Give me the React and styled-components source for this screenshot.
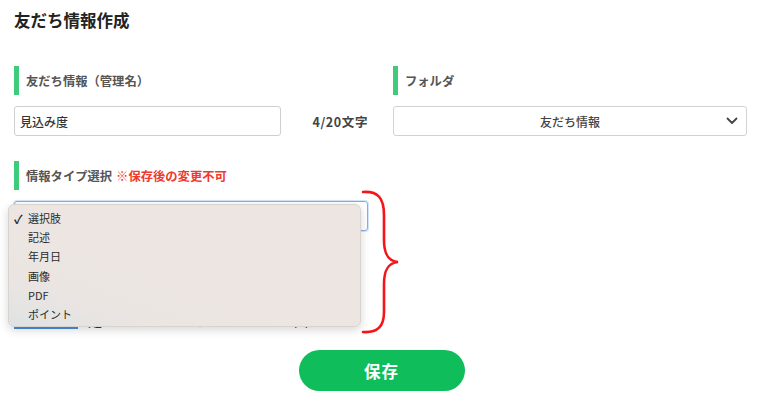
import React from "react";
import styled, { createGlobalStyle } from "styled-components";

const Global = createGlobalStyle`
  html, body { margin: 0; padding: 0; background: #fff; }
  body { font-family: "Noto Sans CJK JP", "Noto Sans", sans-serif; color: #333; }
  * { box-sizing: border-box; }
`;

const Page = styled.div`
  position: relative;
  width: 760px;
  height: 401px;
  overflow: hidden;
  padding: 0 13px 0 14px;
`;

const Title = styled.h1`
  margin: 0;
  padding-top: 10px;
  height: 30px;
  font-size: 16.5px;
  line-height: 20px;
  font-weight: 700;
  color: #222;
`;

const Grid = styled.div`
  display: grid;
  grid-template-columns: 354px 354px;
  column-gap: 25px;
  margin-top: ${(p) => p.$top}px;
`;

const Field = styled.div`
  display: flex;
  flex-direction: column;
  gap: 11px;
`;

const Label = styled.div`
  display: flex;
  align-items: center;
  gap: 7px;
  height: 29px;
  border-left: 5px solid #3ecc7c;
  padding-left: 7px;
  font-size: 12.3px;
  font-weight: 700;
  color: #555;
`;

const Note = styled.span`
  color: #f03a2c;
  margin-left: -3px;
`;

const InputRow = styled.div`
  display: flex;
  align-items: center;
  justify-content: space-between;
  height: 30px;
`;

const TextInput = styled.div`
  width: 267px;
  height: 30px;
  border: 1px solid #cfcfcf;
  border-radius: 3px;
  padding-left: 5px;
  display: flex;
  align-items: center;
  font-size: 12px;
  font-weight: 500;
  color: #333;
`;

const Counter = styled.span`
  font-size: 12.5px;
  font-weight: 700;
  color: #444;
  letter-spacing: 0.6px;
`;

const Select = styled.div`
  position: relative;
  height: 30px;
  border: 1px solid ${(p) => (p.$focused ? "#7eb1ea" : "#d2d2d2")};
  border-radius: 3px;
  display: flex;
  align-items: center;
  justify-content: center;
  font-size: 12px;
  font-weight: 500;
  color: #444;
  box-shadow: ${(p) => (p.$focused ? "0 0 0 1px rgba(126,177,234,0.35)" : "none")};
`;

const Chevron = styled.svg`
  position: absolute;
  right: 8px;
  top: 50%;
  transform: translateY(-50%);
`;

const HiddenRow = styled.div`
  display: flex;
  align-items: flex-start;
  height: 29px;
  margin-top: 74px;
  font-size: 14px;
  color: #333;
`;

const Tab = styled.div`
  width: 64px;
  height: 24px;
  border-bottom: 2px solid #4a8fdc;
  margin-right: 10px;
`;

const Peek = styled.span`
  display: inline-block;
  width: ${(p) => p.$w}px;
  line-height: 30px;
`;

const SaveWrap = styled.div`
  display: flex;
  justify-content: center;
  margin-top: 16px;
  padding-left: 2px;
`;

const SaveButton = styled.button`
  width: 166px;
  height: 41px;
  border: none;
  border-radius: 21px;
  background: #0fbd5b;
  color: #fff;
  font-family: inherit;
  font-size: 16.5px;
  font-weight: 700;
  letter-spacing: 1px;
`;

const Menu = styled.ul`
  position: absolute;
  left: 8px;
  top: 204px;
  width: 353px;
  height: 123px;
  margin: 0;
  padding: 4px 0 0 0;
  list-style: none;
  border-radius: 6px;
  background: linear-gradient(20deg, #dfe3e3 0%, #ebe5e2 22%, #ede5e2 60%, #ede5e2 100%);
  border: 1px solid #d9d3d0;
  box-shadow: 0 3px 10px rgba(0, 0, 0, 0.16);
`;

const MenuItem = styled.li`
  position: relative;
  height: 19.2px;
  line-height: 19.2px;
  padding-left: 19px;
  font-size: 11px;
  color: #2a2a2a;
`;

const Check = styled.span`
  position: absolute;
  left: 5px;
  top: 0;
  font-size: 12px;
  font-weight: 700;
`;

const Brace = styled.svg`
  position: absolute;
  left: 356px;
  top: 186px;
`;

const items = ["選択肢", "記述", "年月日", "画像", "PDF", "ポイント"];

export default function App() {
  return (
    <>
      <Global />
      <Page>
        <Title>友だち情報作成</Title>
        <Grid $top={36}>
          <Field>
            <Label>友だち情報（管理名）</Label>
            <InputRow>
              <TextInput>見込み度</TextInput>
              <Counter>4/20文字</Counter>
            </InputRow>
          </Field>
          <Field>
            <Label>フォルダ</Label>
            <Select>
              友だち情報
              <Chevron width="12" height="8" viewBox="0 0 12 8">
                <path d="M1.5 1.5 L6 6 L10.5 1.5" fill="none" stroke="#444" strokeWidth="1.8" strokeLinecap="round" strokeLinejoin="round" />
              </Chevron>
            </Select>
          </Field>
        </Grid>
        <Grid $top={25}>
          <Field>
            <Label>
              情報タイプ選択 <Note>※保存後の変更不可</Note>
            </Label>
            <Select $focused />
          </Field>
          <div />
        </Grid>
        <HiddenRow>
          <Tab />
          <Peek $w={104}>定</Peek>
          <Peek $w={102}>め</Peek>
          <Peek $w={20}>画</Peek>
        </HiddenRow>
        <SaveWrap>
          <SaveButton>保存</SaveButton>
        </SaveWrap>

        <Menu>
          {items.map((it, i) => (
            <MenuItem key={it}>
              {i === 0 && <Check>✓</Check>}
              {it}
            </MenuItem>
          ))}
        </Menu>

        <Brace width="48" height="152" viewBox="356 186 48 152">
          <path
            d="M363,192 C378,191 384,198 384,215 L384,240 C384,254 388,261 398,262 C388,263 384,270 384,284 L384,312 C384,326 378,333 363,332"
            fill="none"
            stroke="#f5141a"
            strokeWidth="2.6"
            strokeLinecap="round"
          />
        </Brace>
      </Page>
    </>
  );
}
